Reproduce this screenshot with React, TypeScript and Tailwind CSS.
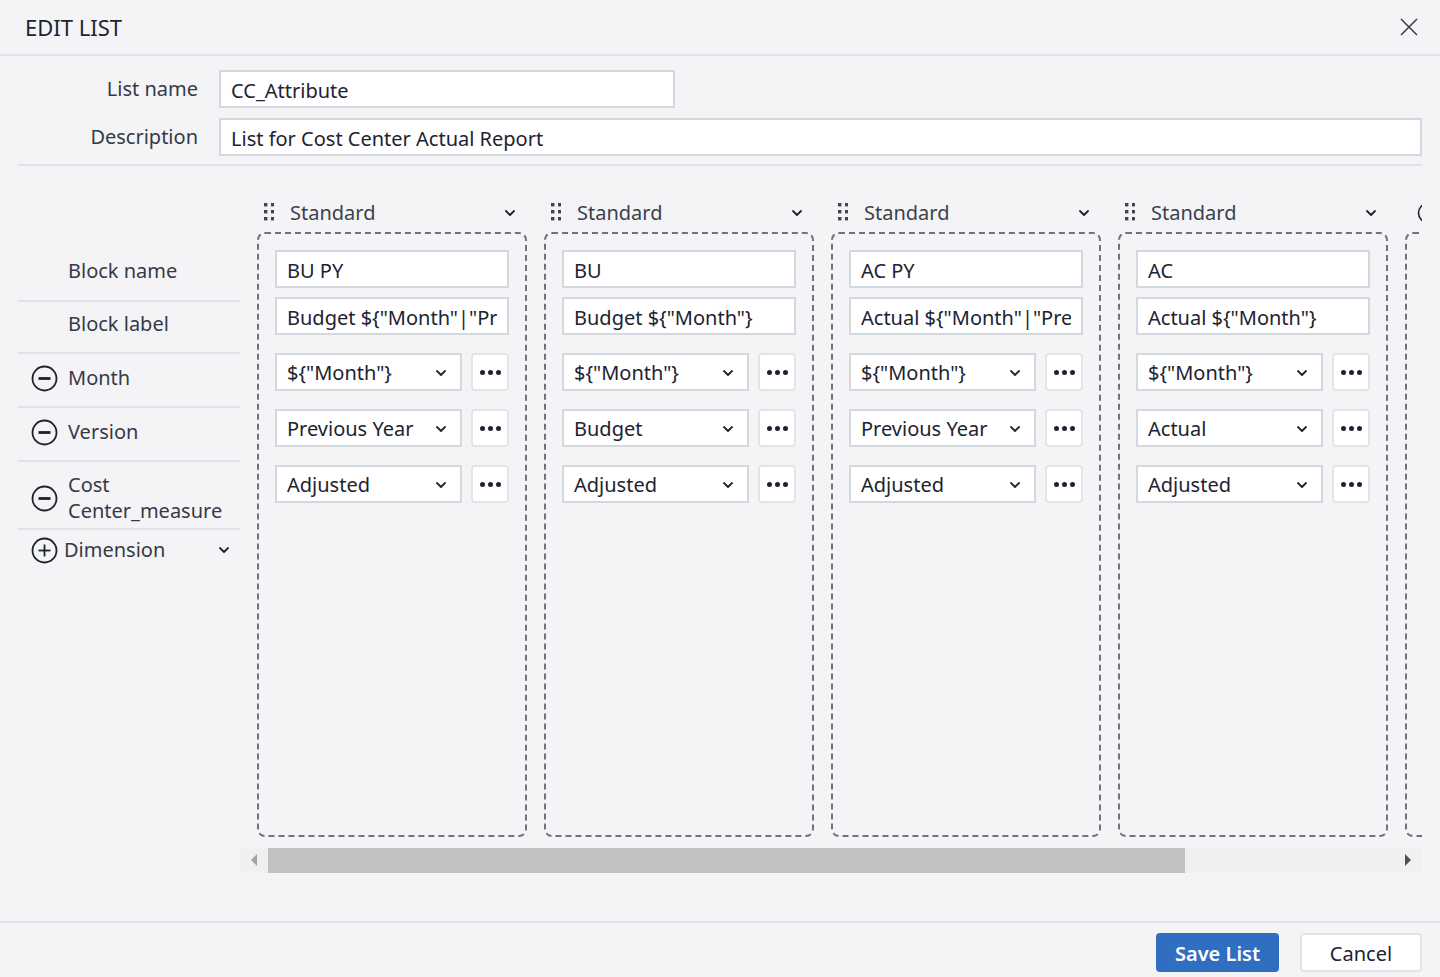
import React from "react";

type Block = {
  name: string;
  label: string;
  month: string;
  version: string;
  measure: string;
};

const blocks: Block[] = [
  { name: "BU PY", label: 'Budget ${"Month"|"Previous Year"}', month: '${"Month"}', version: "Previous Year", measure: "Adjusted" },
  { name: "BU", label: 'Budget ${"Month"}', month: '${"Month"}', version: "Budget", measure: "Adjusted" },
  { name: "AC PY", label: 'Actual ${"Month"|"Previous Year"}', month: '${"Month"}', version: "Previous Year", measure: "Adjusted" },
  { name: "AC", label: 'Actual ${"Month"}', month: '${"Month"}', version: "Actual", measure: "Adjusted" },
];

const Chevron = ({ className = "" }: { className?: string }) => (
  <svg width="14" height="14" viewBox="0 0 14 14" className={className}>
    <path d="M3 5 L7 9 L11 5" fill="none" stroke="#1f2533" strokeWidth="1.8" strokeLinecap="round" strokeLinejoin="round" />
  </svg>
);

const DragDots = () => (
  <svg width="10" height="22" viewBox="0 0 10 22">
    {[1, 8, 15].map((y) =>
      [0, 7].map((x) => <rect key={`${x}-${y}`} x={x} y={y} width="3.4" height="3.4" fill="#3f4450" />)
    )}
  </svg>
);

const CircleIcon = ({ plus }: { plus?: boolean }) => (
  <svg width="27" height="27" viewBox="0 0 27 27" className="shrink-0">
    <circle cx="13.5" cy="13.5" r="12" fill="none" stroke="#1d2230" strokeWidth="1.8" />
    <path d="M7.5 13.5 H19.5" stroke="#1d2230" strokeWidth={plus ? 1.8 : 2.8} />
    {plus && <path d="M13.5 7.5 V19.5" stroke="#1d2230" strokeWidth="1.8" />}
  </svg>
);

const TextBox = ({ value }: { value: string }) => (
  <input
    readOnly
    value={value}
    className="box-border h-[38px] w-full border-2 border-[#d3d7de] bg-white px-[10px] pt-[2px] text-[20px] text-[#1c2331] outline-none"
  />
);

const SelectRow = ({ value }: { value: string }) => (
  <div className="flex h-[38px] gap-[9px]">
    <div className="flex w-[188px] items-center justify-between border-2 border-[#d3d7de] bg-white pl-[10px] pr-[12px] pt-[2px] text-[20px] text-[#1c2331]">
      <span className="whitespace-nowrap">{value}</span>
      <Chevron />
    </div>
    <button className="flex w-[38px] items-center justify-center gap-[3px] rounded-[4px] border-2 border-[#e2e5e9] bg-white">
      <span className="h-[5px] w-[5px] rounded-full bg-[#1c2331]" />
      <span className="h-[5px] w-[5px] rounded-full bg-[#1c2331]" />
      <span className="h-[5px] w-[5px] rounded-full bg-[#1c2331]" />
    </button>
  </div>
);

const BlockColumn = ({ block }: { block: Block }) => (
  <div className="flex w-[270px] shrink-0 flex-col">
    <div className="mb-[4px] flex h-[32px] items-center pl-[7px] pr-[10px] pt-[2px]">
      <DragDots />
      <span className="ml-[16px] flex-1 text-[20px] text-[#3b414d]">Standard</span>
      <Chevron />
    </div>
    <div className="flex h-[605px] flex-col rounded-[8px] border-2 border-dashed border-[#6e737c] px-[16px] pt-[16px]">
      <TextBox value={block.name} />
      <div className="mt-[9px]">
        <TextBox value={block.label} />
      </div>
      <div className="mt-[18px] flex flex-col gap-[18px]">
        <SelectRow value={block.month} />
        <SelectRow value={block.version} />
        <SelectRow value={block.measure} />
      </div>
    </div>
  </div>
);

const RowLabel = ({ children, className = "" }: { children: React.ReactNode; className?: string }) => (
  <div className={`flex items-center border-b-2 border-[#e1e3e7] text-[20px] text-[#343a47] ${className}`}>{children}</div>
);

export default function App() {
  return (
    <div className="flex h-[977px] w-[1440px] flex-col overflow-hidden bg-[#f4f4f6] font-['Noto_Sans',sans-serif]">
      {/* header */}
      <div className="flex h-[56px] shrink-0 items-center justify-between border-b-2 border-[#e1e3e7] pl-[25px] pr-[21px]">
        <h1 className="text-[22px] text-[#1c2331]">EDIT LIST</h1>
        <svg width="20" height="20" viewBox="0 0 20 20">
          <path d="M2 2 L18 18 M18 2 L2 18" stroke="#3a3f4a" strokeWidth="1.6" />
        </svg>
      </div>

      {/* list fields */}
      <div className="mx-[18px] flex flex-col gap-[10px] border-b-2 border-[#e1e3e7] pb-[8px] pt-[14px]">
        <div className="flex items-center">
          <label className="w-[180px] text-right text-[20px] text-[#343a47]">List name</label>
          <div className="ml-[21px] w-[456px]">
            <TextBox value="CC_Attribute" />
          </div>
        </div>
        <div className="flex items-center">
          <label className="w-[180px] text-right text-[20px] text-[#343a47]">Description</label>
          <div className="ml-[21px] flex-1">
            <TextBox value="List for Cost Center Actual Report" />
          </div>
        </div>
      </div>

      {/* blocks */}
      <div className="mt-[30px] flex flex-1 pl-[18px] pr-[18px]">
        <div className="mt-[38px] w-[222px] shrink-0">
          <RowLabel className="h-[68px] pl-[50px] pt-[8px]">Block name</RowLabel>
          <RowLabel className="h-[52px] pb-[6px] pl-[50px]">Block label</RowLabel>
          <RowLabel className="h-[54px] gap-[10px] pb-[4px] pl-[13px]">
            <CircleIcon />
            Month
          </RowLabel>
          <RowLabel className="h-[54px] gap-[10px] pb-[4px] pl-[13px]">
            <CircleIcon />
            Version
          </RowLabel>
          <RowLabel className="h-[68px] gap-[10px] pl-[13px] pt-[6px] leading-[26px]">
            <CircleIcon />
            <span>
              Cost
              <br />
              Center_measure
            </span>
          </RowLabel>
          <div className="flex h-[40px] items-center gap-[6px] pl-[13px] pr-[9px] text-[20px] text-[#343a47]">
            <CircleIcon plus />
            <span className="flex-1">Dimension</span>
            <Chevron />
          </div>
        </div>

        <div className="flex w-[1182px] flex-col">
          <div className="flex gap-[17px] overflow-hidden pl-[17px]">
            {blocks.map((b) => (
              <BlockColumn key={b.name} block={b} />
            ))}
            <div className="flex w-[270px] shrink-0 flex-col">
              <div className="mb-[4px] flex h-[32px] items-center pl-[12px] pt-[2px]">
                <svg width="22" height="22" viewBox="0 0 22 22">
                  <circle cx="11" cy="11" r="9.5" fill="none" stroke="#1d2230" strokeWidth="1.6" />
                </svg>
              </div>
              <div className="h-[605px] rounded-[8px] border-2 border-dashed border-[#6e737c]" />
            </div>
          </div>

          {/* scrollbar */}
          <div className="mt-[10px] flex h-[26px] items-center bg-[#f0f0f0]">
            <div className="flex w-[28px] items-center justify-center">
              <svg width="8" height="12" viewBox="0 0 8 12">
                <path d="M7 0 L1 6 L7 12 Z" fill="#a3a3a3" />
              </svg>
            </div>
            <div className="h-[25px] w-[917px] bg-[#c1c1c1]" />
            <div className="flex flex-1 items-center justify-end pr-[10px]">
              <svg width="8" height="12" viewBox="0 0 8 12">
                <path d="M1 0 L7 6 L1 12 Z" fill="#505050" />
              </svg>
            </div>
          </div>
        </div>
      </div>

      {/* footer */}
      <div className="flex h-[56px] shrink-0 items-start justify-end gap-[21px] border-t-2 border-[#e1e3e7] pr-[18px] pt-[10px]">
        <button className="h-[39px] w-[123px] rounded-[4px] bg-[#2f6ec0] pt-[2px] text-[20px] font-semibold text-white">Save List</button>
        <button className="h-[39px] w-[122px] rounded-[4px] border-2 border-[#e0e3e7] bg-white pt-[2px] text-[20px] text-[#1c2331]">Cancel</button>
      </div>
    </div>
  );
}
